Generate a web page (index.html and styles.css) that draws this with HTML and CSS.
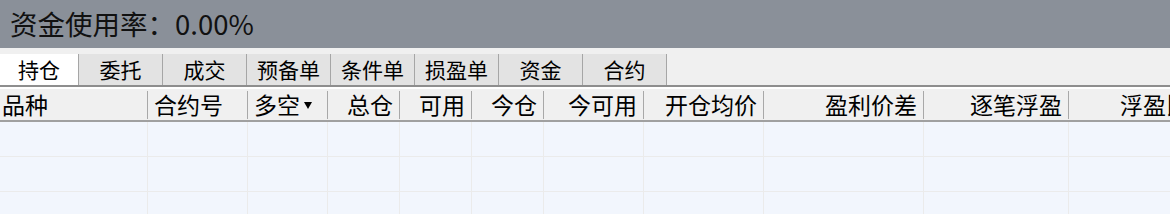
FILE: index.html
```html
<!DOCTYPE html>
<html lang="zh-CN">
<head>
<meta charset="utf-8">
<title>持仓</title>
<link rel="stylesheet" href="styles.css">
</head>
<body>
<div class="app">
  <div class="topbar">资金使用率：0.00%</div>
  <div class="tabstrip">
    <div class="tab tab-first active">持仓</div>
    <div class="tab">委托</div>
    <div class="tab">成交</div>
    <div class="tab">预备单</div>
    <div class="tab">条件单</div>
    <div class="tab">损盈单</div>
    <div class="tab">资金</div>
    <div class="tab">合约</div>
  </div>
  <div class="grid">
    <div class="hcell left first">品种</div>
    <div class="hcell left">合约号</div>
    <div class="hcell left">多空<span class="sort"></span></div>
    <div class="hcell">总仓</div>
    <div class="hcell">可用</div>
    <div class="hcell">今仓</div>
    <div class="hcell">今可用</div>
    <div class="hcell">开仓均价</div>
    <div class="hcell">盈利价差</div>
    <div class="hcell">逐笔浮盈</div>
    <div class="hcell">浮盈比例</div>

    <div class="cell"></div><div class="cell"></div><div class="cell"></div><div class="cell"></div><div class="cell"></div><div class="cell"></div><div class="cell"></div><div class="cell"></div><div class="cell"></div><div class="cell"></div><div class="cell"></div>
    <div class="cell"></div><div class="cell"></div><div class="cell"></div><div class="cell"></div><div class="cell"></div><div class="cell"></div><div class="cell"></div><div class="cell"></div><div class="cell"></div><div class="cell"></div><div class="cell"></div>
    <div class="cell"></div><div class="cell"></div><div class="cell"></div><div class="cell"></div><div class="cell"></div><div class="cell"></div><div class="cell"></div><div class="cell"></div><div class="cell"></div><div class="cell"></div><div class="cell"></div>
  </div>
</div>
</body>
</html>
```
FILE: styles.css
```css
html, body {
  margin: 0;
  padding: 0;
  background: #f2f6fd;
  overflow: hidden;
}
.app {
  width: 1170px;
  height: 214px;
  overflow: hidden;
  font-family: "Noto Sans CJK SC", "Noto Sans", sans-serif;
  color: #000;
}
.topbar {
  height: 48px;
  line-height: 46px;
  background: #8a9099;
  padding-left: 10px;
  font-size: 27.5px;
  color: #111;
}
.tabstrip {
  display: flex;
  height: 31px;
  padding-top: 6px;
  background: #f0f0f0;
  border-bottom: 2px solid #8e8e8e;
}
.tab {
  width: 83px;
  border-right: 1px solid #a6a6a6;
  background: #e3e3e3;
  font-size: 21px;
  line-height: 31px;
  text-align: center;
  flex: none;
}
.tab-first {
  width: 78px;
}
.tab.active {
  background: #fff;
}
.grid {
  display: grid;
  grid-template-columns: 148px 100px 80px 72px 72px 72px 100px 120px 160px 145px 150px;
  grid-template-rows: 33px;
  grid-auto-rows: 35px;
  border-top: 2px solid #fff;
  width: 1219px;
}
.hcell {
  background: #f0f0f0;
  border-bottom: 2px solid #a0a0a0;
  font-size: 23px;
  line-height: 31px;
  text-align: right;
  padding-right: 7px;
  position: relative;
  white-space: nowrap;
}
.hcell::after {
  content: "";
  position: absolute;
  right: 0;
  top: 2px;
  bottom: 1px;
  width: 1px;
  background: #a8a8a8;
}
.hcell.left {
  text-align: left;
  padding-left: 6px;
  padding-right: 0;
}
.hcell.first {
  padding-left: 2px;
}
.sort {
  display: inline-block;
  width: 0;
  height: 0;
  margin-left: 4px;
  vertical-align: 5px;
  border-left: 4px solid transparent;
  border-right: 4px solid transparent;
  border-top: 7px solid #000;
}
.cell {
  border-right: 1px solid #ebebeb;
  border-bottom: 1px solid #ebebeb;
  background: #f2f6fd;
}
```
